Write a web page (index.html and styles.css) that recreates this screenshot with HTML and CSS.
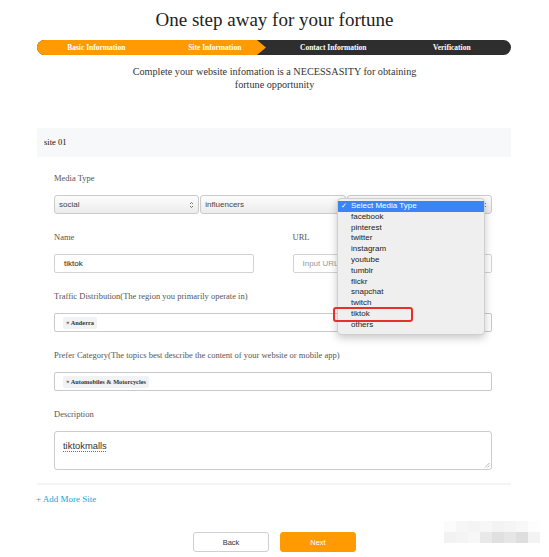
FILE: index.html
```html
<!DOCTYPE html>
<html lang="en">
<head>
<meta charset="utf-8">
<title>Site Information</title>
<link rel="stylesheet" href="styles.css">
</head>
<body>
<h1 class="title">One step away for your fortune</h1>

<div class="steps">
  <div class="steps-fill"></div>
  <span class="step">Basic Information</span>
  <span class="step">Site Information</span>
  <span class="step">Contact Information</span>
  <span class="step">Verification</span>
</div>

<p class="intro">Complete your website infomation is a NECESSASITY for obtaining<br>fortune opportunity</p>

<section class="card">
  <div class="card-head">site 01</div>
  <div class="card-body">
    <div class="field">
      <div class="label">Media Type</div>
      <div class="select-row">
        <div class="select"><span>social</span>
          <svg class="arrows" width="5" height="8" viewBox="0 0 5 8"><path d="M1 3 L2.5 1.5 L4 3 M1 5 L2.5 6.5 L4 5" fill="none" stroke="#666" stroke-width="0.9"/></svg>
        </div>
        <div class="select"><span>influencers</span>
          <svg class="arrows" width="5" height="8" viewBox="0 0 5 8"><path d="M1 3 L2.5 1.5 L4 3 M1 5 L2.5 6.5 L4 5" fill="none" stroke="#666" stroke-width="0.9"/></svg>
        </div>
        <div class="select"><span></span>
          <svg class="arrows" width="5" height="8" viewBox="0 0 5 8"><path d="M1 3 L2.5 1.5 L4 3 M1 5 L2.5 6.5 L4 5" fill="none" stroke="#666" stroke-width="0.9"/></svg>
        </div>
        <ul class="menu">
          <li class="active"><span class="check">✓</span>Select Media Type</li>
          <li>facebook</li>
          <li>pinterest</li>
          <li>twitter</li>
          <li>instagram</li>
          <li>youtube</li>
          <li>tumblr</li>
          <li>flickr</li>
          <li>snapchat</li>
          <li>twitch</li>
          <li>tiktok</li>
          <li>others</li>
          <span class="mark"></span>
        </ul>
      </div>
    </div>

    <div class="pair">
      <div class="field">
        <div class="label">Name</div>
        <div class="input">tiktok</div>
      </div>
      <div class="field">
        <div class="label">URL</div>
        <div class="input placeholder">Input URL</div>
      </div>
    </div>

    <div class="field">
      <div class="label">Traffic Distribution(The region you primarily operate in)</div>
      <div class="input tags"><span class="chip">× Anderra</span></div>
    </div>

    <div class="field">
      <div class="label">Prefer Category(The topics best describe the content of your website or mobile app)</div>
      <div class="input tags"><span class="chip">× Automobiles &amp; Motorcycles</span></div>
    </div>

    <div class="field">
      <div class="label">Description</div>
      <div class="textarea"><span class="spell">tiktokmalls</span>
        <svg class="grip" width="6" height="6" viewBox="0 0 6 6"><path d="M5.5 1 L1 5.5 M5.5 3.5 L3.5 5.5" stroke="#999" stroke-width="0.7"/></svg>
      </div>
    </div>
  </div>
</section>

<a class="add-more">+ Add More Site</a>

<div class="actions">
  <button class="btn btn-back">Back</button>
  <button class="btn btn-next">Next</button>
</div>

<div class="mosaic">
  <i style="background:#fbfbfb"></i><i style="background:#f6f6f6"></i><i style="background:#f4f4f4"></i><i style="background:#f7f7f7"></i><i style="background:#f3f3f3"></i><i style="background:#f5f5f5"></i><i style="background:#f8f8f8"></i><i style="background:#fdfdfd"></i>
  <i style="background:#f2f2f2"></i><i style="background:#f4f4f4"></i><i style="background:#f7f7f7"></i><i style="background:#e9e9e9"></i><i style="background:#e0e0e0"></i><i style="background:#e6e6e6"></i><i style="background:#dedede"></i><i style="background:#f3f3f3"></i>
</div>
</body>
</html>
```

FILE: styles.css
```css
* { box-sizing: border-box; }
html, body { margin: 0; padding: 0; background: #fff; }
body {
  position: relative;
  width: 549px;
  height: 557px;
  overflow: hidden;
  font-family: "Liberation Serif", "Times New Roman", serif;
  color: #333;
}

.title {
  margin: 9px 0 0;
  font-size: 19px;
  line-height: 22px;
  font-weight: normal;
  text-align: center;
  color: #222;
}

.steps {
  position: relative;
  display: flex;
  height: 15px;
  margin: 9px 38px 0 37px;
  border-radius: 8px;
  background: #2e2e2e;
  overflow: hidden;
}
.steps-fill {
  position: absolute;
  left: 0; top: 0; bottom: 0;
  width: 229px;
  background: #ff9a00;
  clip-path: polygon(0 0, calc(100% - 9px) 0, 100% 50%, calc(100% - 9px) 100%, 0 100%);
}
.step {
  position: relative;
  flex: 1;
  text-align: center;
  color: #fff;
  font-size: 7.5px;
  font-weight: bold;
  line-height: 15px;
}

.intro {
  margin: 10px 0 0;
  text-align: center;
  font-size: 10.2px;
  line-height: 13px;
  color: #333;
}

.card {
  margin: 37px 38px 0 37px;
  border-bottom: 2px solid #f3f4f5;
}
.card-head {
  height: 29px;
  line-height: 29px;
  padding-left: 7px;
  background: #f7f8fa;
  font-size: 8.5px;
  color: #111;
}
.card-body {
  display: flex;
  flex-direction: column;
  gap: 17px;
  padding: 15px 19px 13px 17px;
}
.field { display: flex; flex-direction: column; }
.label {
  font-size: 8.5px;
  line-height: 12px;
  color: #555;
  margin-bottom: 11px;
  white-space: nowrap;
}
.pair {
  display: grid;
  grid-template-columns: 1fr 1fr;
  column-gap: 39px;
}

.select-row {
  position: relative;
  display: grid;
  grid-template-columns: repeat(3, 1fr);
  column-gap: 1px;
}
.select {
  display: flex;
  align-items: center;
  justify-content: space-between;
  height: 19px;
  padding: 0 4px 0 4px;
  border: 1px solid #cbcbcb;
  border-radius: 3px;
  background: linear-gradient(#fdfdfd, #ececec);
  font-family: "Liberation Sans", Arial, sans-serif;
  font-size: 8px;
  color: #444;
}
.arrows { flex: none; }

.menu {
  position: absolute;
  left: 283px;
  top: 3px;
  width: 148px;
  margin: 0;
  padding: 2px 0 3px;
  list-style: none;
  background: #efefef;
  border: 1px solid #cfcfcf;
  border-radius: 4px;
  box-shadow: 0 3px 9px rgba(0,0,0,0.22);
  font-family: "Liberation Sans", Arial, sans-serif;
  font-size: 8px;
  color: #222;
  z-index: 2;
}
.menu li {
  height: 10.8px;
  line-height: 10.8px;
  padding-left: 13px;
  position: relative;
}
.menu li.active {
  background: #3a84f7;
  color: #fff;
}
.check {
  position: absolute;
  left: 3px;
  top: 0;
  font-family: "DejaVu Sans", sans-serif;
  font-size: 7px;
}
.mark {
  position: absolute;
  left: -5px;
  top: 108px;
  width: 80px;
  height: 15px;
  border: 2px solid #e8302a;
  border-radius: 3px;
}

.input {
  display: flex;
  align-items: center;
  height: 19px;
  padding-left: 9px;
  border: 1px solid #d3d3d3;
  border-radius: 2px;
  background: #fff;
  font-family: "Liberation Sans", Arial, sans-serif;
  font-size: 8px;
  color: #222;
}
.input.placeholder { color: #999; }
.input.tags { padding-left: 8px; border-color: #c9c9c9; }
.chip {
  padding: 0 3px;
  height: 12px;
  line-height: 12px;
  background: #f1f2f4;
  border-radius: 2px;
  font-family: "Liberation Serif", serif;
  font-size: 6.3px;
  font-weight: bold;
  color: #333;
}

.textarea {
  position: relative;
  height: 39px;
  padding: 8px 8px;
  border: 1px solid #ccc;
  border-radius: 3px;
  font-family: "Liberation Sans", Arial, sans-serif;
  font-size: 9.4px;
  line-height: 12px;
  color: #333;
}
.spell {
  text-decoration: underline dotted #e53935;
  text-underline-offset: 2px;
}
.grip { position: absolute; right: 1px; bottom: 1px; }

.add-more {
  display: block;
  margin: 8px 0 0 36px;
  font-size: 9px;
  line-height: 12px;
  color: #1a9fd6;
}

.actions {
  display: flex;
  justify-content: center;
  gap: 11px;
  margin-top: 27px;
}
.btn {
  width: 76px;
  height: 20px;
  border-radius: 3px;
  font-family: "Liberation Sans", Arial, sans-serif;
  font-size: 7.5px;
  padding: 0;
}
.btn-back { background: #fff; border: 1px solid #cfcfcf; color: #333; }
.btn-next { background: #ff9a00; border: 1px solid #ff9a00; color: #fff; }

.mosaic {
  position: absolute;
  left: 444px;
  top: 521px;
  display: grid;
  grid-template-columns: repeat(8, 12px);
  grid-auto-rows: 11px;
}
.mosaic i { display: block; }
```
